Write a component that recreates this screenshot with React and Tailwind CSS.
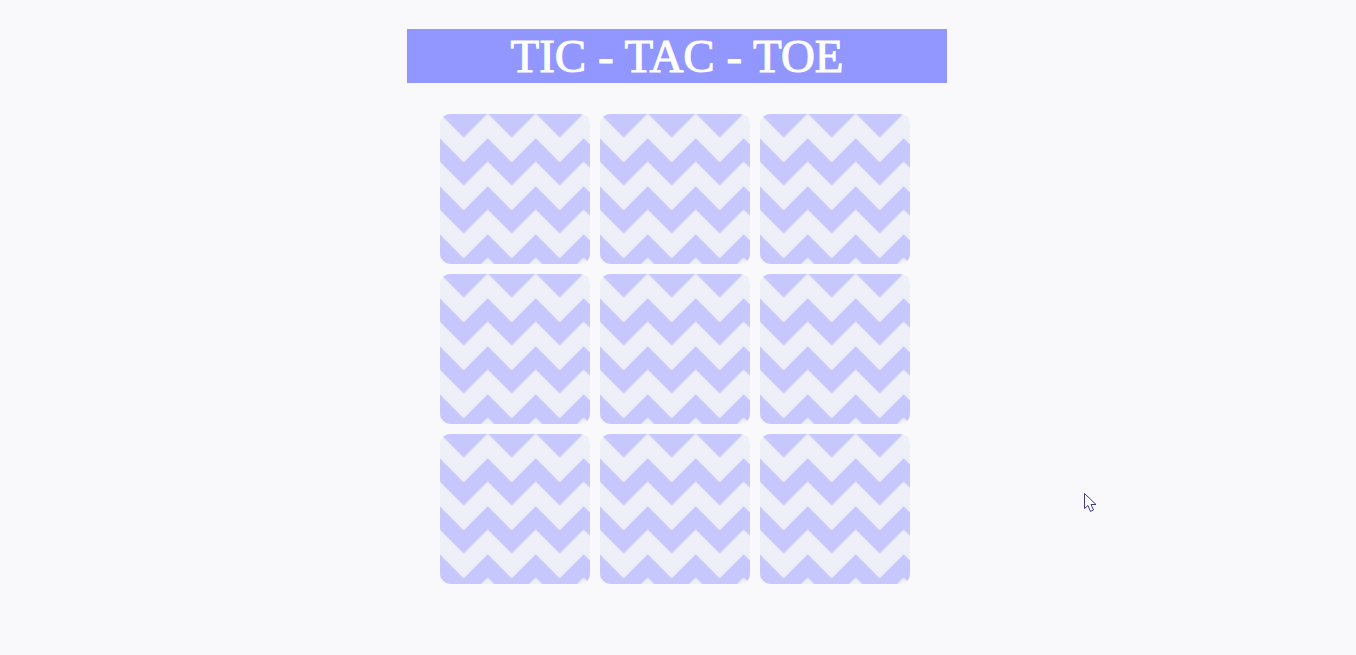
function Tile() {
  return (
    <div className="w-[150px] h-[150px] rounded-[10px] overflow-hidden bg-[#eeeff8]">
      <svg width="150" height="150" className="block">
        <defs>
          <pattern id="chevron" width="48" height="48" patternUnits="userSpaceOnUse" patternTransform="translate(-0.3 0)">
            <polygon points="0,24.3 24,48.3 48,24.3 48,47.5 24,71.5 0,47.5" fill="#c6c7fc" />
            <polygon points="0,-23.7 24,0.3 48,-23.7 48,-0.5 24,23.5 0,-0.5" fill="#c6c7fc" />
          </pattern>
        </defs>
        <rect width="150" height="150" fill="url(#chevron)" />
      </svg>
    </div>
  );
}

export default function App() {
  return (
    <div className="relative min-h-[655px] bg-[#f9f9fb] pt-[29px] pl-[407px] overflow-hidden">
      <div className="w-[540px]">
        <h1 className="h-[54px] bg-[#9296ff] text-white text-center text-[47px] leading-[54px] [-webkit-text-stroke:1px_white] font-['Liberation_Serif',serif]">
          TIC - TAC - TOE
        </h1>
        <div className="grid grid-cols-[repeat(3,150px)] gap-[10px] mt-[31px] ml-[33px]">
          {Array.from({ length: 9 }, (_, i) => (
            <Tile key={i} />
          ))}
        </div>
      </div>
      <svg className="absolute left-[1083px] top-[492px]" width="16" height="22" viewBox="0 0 16 22">
        <path d="M1.5 1.5 V16.5 L5 13.5 L7.5 19.5 L10.5 18 L8 12.5 H13 Z" fill="#ffffff" stroke="#3b3b8f" strokeWidth="1" />
      </svg>
    </div>
  );
}
